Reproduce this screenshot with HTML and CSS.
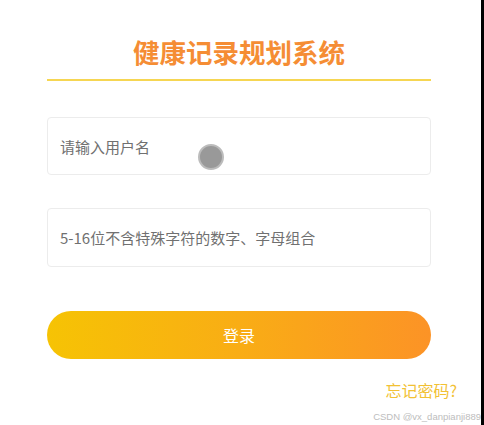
FILE: index.html
```html
<!DOCTYPE html>
<html lang="zh-CN">
<head>
<meta charset="utf-8">
<title>健康记录规划系统</title>
<link rel="stylesheet" href="styles.css">
</head>
<body>
<div class="page">
  <div class="form">
    <h1 class="title">健康记录规划系统</h1>
    <div class="field field-user"><span class="ph">请输入用户名</span></div>
    <div class="field field-pass"><span class="ph">5-16位不含特殊字符的数字、字母组合</span></div>
    <button class="login">登录</button>
  </div>
  <div class="forgot">忘记密码?</div>
  <div class="mark">CSDN @vx_danpianji889</div>
  <div class="touch"></div>
</div>
</body>
</html>
```
FILE: styles.css
```css
html, body {
  margin: 0;
  padding: 0;
  background: #000;
}
.page {
  position: relative;
  width: 481px;
  height: 425px;
  background: #fff;
  font-family: "Noto Sans CJK SC", "Noto Sans", sans-serif;
  overflow: hidden;
}
.form {
  margin: 0 50px 0 47px;
  display: flex;
  flex-direction: column;
}
.title {
  margin: 0;
  padding: 34px 0 9px;
  line-height: 36px;
  font-size: 26.5px;
  font-weight: 700;
  color: #f58d34;
  text-align: center;
  border-bottom: 2px solid #f6d652;
}
.field {
  box-sizing: border-box;
  height: 58px;
  border: 1px solid #ececec;
  border-radius: 4px;
  display: flex;
  align-items: center;
  padding-left: 12px;
}
.field-user {
  margin-top: 36px;
}
.field-pass {
  margin-top: 33px;
  height: 59px;
}
.ph {
  font-size: 15px;
  color: #707070;
}
.login {
  margin-top: 44px;
  height: 48px;
  border: none;
  border-radius: 24px;
  background: linear-gradient(90deg, #f6c304 0%, #f9ad15 50%, #fc9326 100%);
  color: #fff;
  font-family: inherit;
  font-size: 16px;
  padding: 0;
}
.forgot {
  margin-top: 20px;
  padding-right: 24px;
  text-align: right;
  font-size: 16px;
  line-height: 22px;
  color: #f2c134;
}
.mark {
  margin-top: 10px;
  text-align: right;
  padding-right: 0;
  font-family: "Liberation Sans", Arial, sans-serif;
  font-size: 9.5px;
  line-height: 12px;
  color: #bdbdbd;
  white-space: nowrap;
}
.touch {
  position: absolute;
  left: 198px;
  top: 144px;
  width: 22px;
  height: 22px;
  border-radius: 50%;
  background: #999;
  border: 2px solid #bcbcbc;
}
```
